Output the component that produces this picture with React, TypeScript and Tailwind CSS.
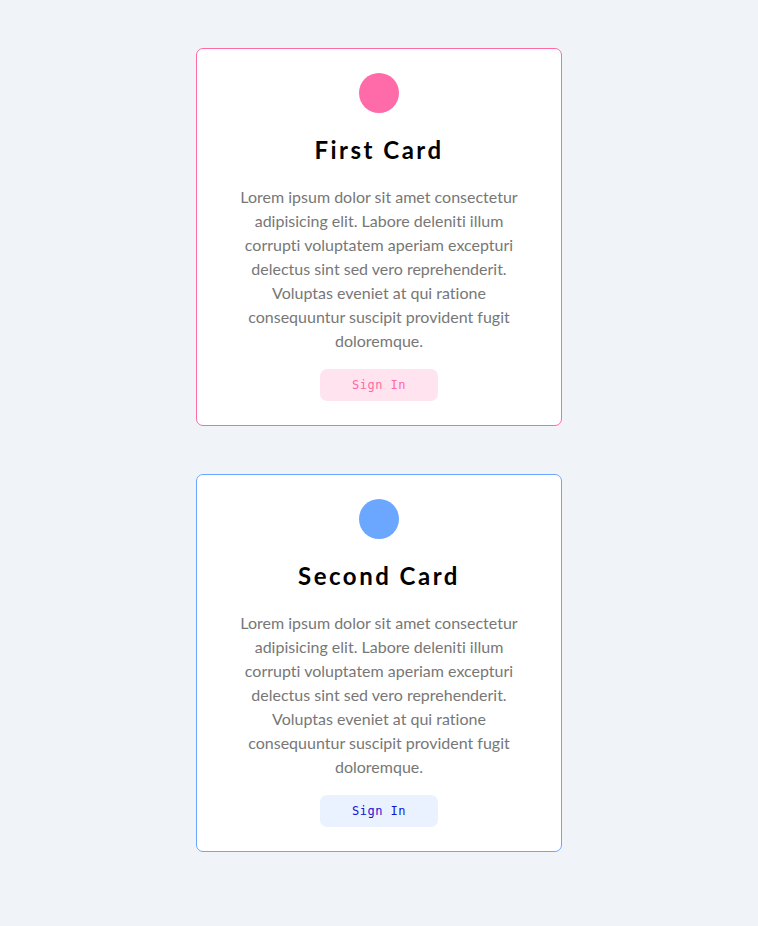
import React from 'react'

type CardProps = {
    title: string
    border: string
    dot: string
    btn: string
}

const body = "Lorem ipsum dolor sit amet consectetur adipisicing elit. Labore deleniti illum corrupti voluptatem aperiam excepturi delectus sint sed vero reprehenderit. Voluptas eveniet at qui ratione consequuntur suscipit provident fugit doloremque."

const Card = ({ title, border, dot, btn }: CardProps) => {
    return (
        <div className={`w-[366px] bg-white rounded-[7px] border px-9 pt-6 pb-6 flex flex-col items-center ${border}`}>
            <div className={`w-10 h-10 rounded-full ${dot}`} />
            <h3 className="mt-[21px] text-[24px] leading-8 font-bold tracking-[2.5px] text-black">{title}</h3>
            <p className="mt-[19px] text-[16px] leading-6 text-center text-[#777777] [font-variant-ligatures:none]">{body}</p>
            <button className={`mt-4 w-[118px] h-8 rounded-[7px] text-[12px] tracking-[0.5px] font-['DejaVu_Sans_Mono',monospace] ${btn}`}>Sign In</button>
        </div>
    )
}

export default function App() {
    return (
        <div className="min-h-screen bg-[#f0f4f8] flex flex-col items-center pt-12 gap-12 font-['Lato',sans-serif]">
            <Card
                title="First Card"
                border="border-[#ff69a4]"
                dot="bg-[#ff6ba8]"
                btn="bg-[#ffe4ef] text-[#ff69a4]"
            />
            <Card
                title="Second Card"
                border="border-[#6aa6ff]"
                dot="bg-[#6ba6ff]"
                btn="bg-[#eaf2ff] text-[#1414d4]"
            />
        </div>
    )
}
